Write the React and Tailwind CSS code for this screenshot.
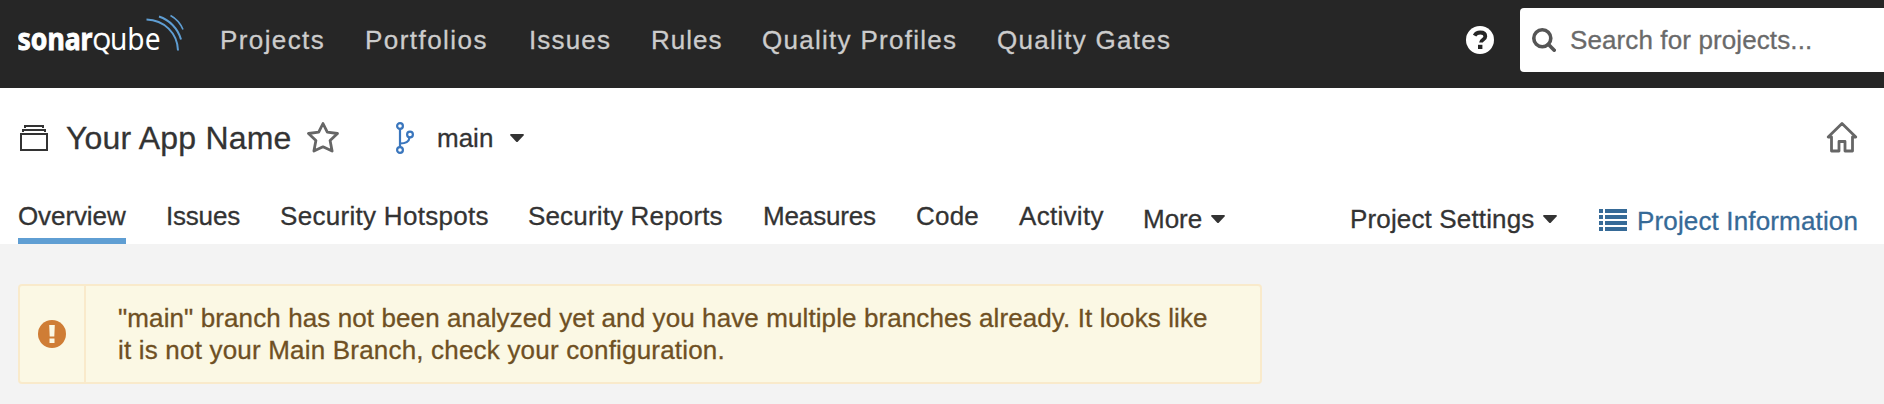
import React from "react";

const NAV = [
  { label: "Projects", cls: "w-[105px] tracking-[1.4px]" },
  { label: "Portfolios", cls: "w-[124px] tracking-[1.45px]" },
  { label: "Issues", cls: "w-[82px] tracking-[1.15px]" },
  { label: "Rules", cls: "w-[71px] tracking-[1px]" },
  { label: "Quality Profiles", cls: "w-[195px] tracking-[1.28px]" },
  { label: "Quality Gates", cls: "w-[175px] tracking-[1.3px]" },
];

const TABS = [
  { label: "Overview", cls: "w-[108px] tracking-[-0.1px]", active: true },
  { label: "Issues", cls: "w-[74px] tracking-[-0.2px]" },
  { label: "Security Hotspots", cls: "w-[208px] tracking-[0.3px]" },
  { label: "Security Reports", cls: "w-[195px] tracking-[0.16px]" },
  { label: "Measures", cls: "w-[113px] tracking-[-0.15px]" },
  { label: "Code", cls: "w-[63px] tracking-[0.2px]" },
  { label: "Activity", cls: "w-[85px] tracking-[0.3px]" },
];

function Caret({ className = "" }) {
  return (
    <svg className={`h-2 w-3.5 shrink-0 ${className}`} viewBox="0 0 14 8">
      <path d="M1 0h12q1.4.3.6 1.4L8 7.4q-1 1-2 0L.4 1.400Q-.4.3 1 0z" fill="#333" />
    </svg>
  );
}

function Logo() {
  return (
    <svg className="h-[54px] w-[168px] shrink-0" viewBox="18 8 168 54">
      <g fill="#fff" fontFamily="'Noto Sans', sans-serif">
        <text x="17.500" y="50" fontSize="30" fontWeight="700" textLength="75" lengthAdjust="spacingAndGlyphs" stroke="#fff" strokeWidth="0.900">sonar</text>
        <text x="92.500" y="50" fontSize="23" textLength="18.500" lengthAdjust="spacingAndGlyphs" stroke="#fff" strokeWidth="0.300">Q</text>
        <text x="110" y="50" fontSize="30" fontWeight="400" textLength="50.500" lengthAdjust="spacingAndGlyphs">ube</text>
      </g>
      <g fill="none" stroke="#5f9ed3" strokeWidth="2">
        <path d="M146.500 19.500C164 20 177.500 33 178 50.500" />
        <path d="M159 16.500C169.500 20 178 28.500 181 39.500" />
        <path d="M170.500 15.500C176 18.500 180.500 23.500 183 29.500" strokeWidth="1.600" />
      </g>
    </svg>
  );
}

export default function App() {
  return (
    <div className="h-[404px] w-[1884px] overflow-hidden bg-[#f3f3f3] font-['Liberation_Sans',Arial,sans-serif] text-[26px] leading-8 text-[#333] [-webkit-text-stroke:0.3px]">
      <header className="flex h-[88px] items-start bg-[#262626] pl-[18px]">
        <div className="pt-2 [-webkit-text-stroke:0]">
          <Logo />
        </div>
        <nav className="ml-[34px] flex gap-10 pt-6 text-[#ccc]">
          {NAV.map((n) => (
            <a key={n.label} className={`whitespace-nowrap ${n.cls}`}>{n.label}</a>
          ))}
        </nav>
        <svg className="mt-[26px] ml-auto size-7" viewBox="0 0 28 28">
          <circle cx="14" cy="14" r="14" fill="#fff" />
          <path d="M8.600 9.600C10 7 12 6.500 14.200 6.500c3 0 5.100 1.400 5.100 3.900 0 3.400-4.300 3.200-4.300 6" fill="none" stroke="#262626" strokeWidth="3.800" />
          <rect x="12" y="18.800" width="4.400" height="4.200" fill="#262626" />
        </svg>
        <div className="mt-2 ml-[26px] flex h-16 w-[364px] items-center rounded-l bg-white pl-3">
          <svg className="size-6" viewBox="0 0 24 24" fill="none" stroke="#555" strokeWidth="3.600">
            <circle cx="10.300" cy="10.300" r="8.500" />
            <path d="M16.300 16.300L22.200 22.200" strokeLinecap="round" />
          </svg>
          <span className="ml-3.5 tracking-[0.11px] whitespace-nowrap text-[#6a6a6a]">Search for projects...</span>
        </div>
      </header>

      <section className="flex h-[156px] flex-col justify-between bg-white pr-[26px] pl-[18px]">
        <div className="flex h-[100px] items-center">
          <svg className="ml-0.5 h-[26px] w-7" viewBox="0 0 28 26" fill="none" stroke="#333" strokeWidth="2">
            <path d="M1 9h26v16H1z" />
            <path d="M3 7V5h22v2M5 3V1h18v2" />
          </svg>
          <h1 className="ml-[18px] w-[227px] text-[32px] leading-9 tracking-[0.2px] whitespace-nowrap">Your App Name</h1>
          <svg className="ml-3.5 -mt-0.5 h-[31px] w-8" viewBox="0 0 32 31">
            <path d="M16 1.500l4.300 8.700 10.200 1.300-7.400 6.900 2 10.600L16 24.800 6.900 29l2-10.600-7.400-6.900 10.200-1.300z" fill="none" stroke="#666" strokeWidth="2.800" strokeLinejoin="round" />
          </svg>
          <svg className="ml-[57px] h-8 w-[18px]" viewBox="0 0 18 32" fill="none" stroke="#3a76bd" strokeWidth="2.200">
            <circle cx="4" cy="4" r="2.900" />
            <circle cx="4" cy="28" r="2.900" />
            <circle cx="14" cy="12.500" r="2.900" />
            <path d="M4 7v18M4 21.500c5 0 9-1 9.500-6" />
          </svg>
          <span className="ml-[23px] w-14">main</span>
          <Caret className="ml-[17px]" />
          <svg className="ml-auto -mt-0.5 h-8 w-8" viewBox="0 0 32 32">
            <path d="M16 2.500L2.200 16H5.500V30H13V20.500h6V30h7.500V16h3.300z" fill="none" stroke="#666" strokeWidth="2.800" strokeLinejoin="round" />
          </svg>
        </div>
        <div className="flex h-[44px] items-start">
          <nav className="flex items-start gap-10">
            {TABS.map((t) => (
              <a
                key={t.label}
                className={`h-[44px] whitespace-nowrap ${t.cls} ${t.active ? "border-b-6 border-[#5f9ed3]" : ""}`}
              >
                {t.label}
              </a>
            ))}
            <a className="-ml-px flex items-center pt-[3px]">
              <span className="w-[60px]">More</span>
              <Caret className="ml-2" />
            </a>
          </nav>
          <div className="ml-auto flex items-start pt-[3px]">
            <a className="flex items-center">
              <span className="w-[185px] tracking-[0.15px] whitespace-nowrap">Project Settings</span>
              <Caret className="ml-2" />
            </a>
            <a className="mt-0.5 ml-[42px] flex items-center text-[#366a97]">
              <svg className="h-[22px] w-7 -translate-y-px" viewBox="0 0 28 22" fill="currentColor">
                <path d="M0 0h4v4H0zM6 0h22v4H6zM0 6h4v4H0zM6 6h22v4H6zM0 12h4v4H0zM6 12h22v4H6zM0 18h4v4H0zM6 18h22v4H6z" />
              </svg>
              <span className="ml-[10px] w-[221px] tracking-[0.15px] whitespace-nowrap">Project Information</span>
            </a>
          </div>
        </div>
      </section>

      <main className="px-[18px] pt-10">
        <div className="flex h-[100px] w-[1244px] rounded border-2 border-[#f9eacb] bg-[#fbf8e4] text-[#6f5023]">
          <div className="flex w-[66px] items-center justify-center border-r-2 border-[#f9eacb]">
            <svg className="size-7" viewBox="0 0 28 28">
              <circle cx="14" cy="14" r="14" fill="#cf7d35" />
              <path d="M11.200 5h5.600l-.5 11.500h-4.600zM11.500 18.500h5v4.500h-5z" fill="#fbf8e4" />
            </svg>
          </div>
          <p className="pt-4 pl-8 whitespace-nowrap">
            <span className="block tracking-[0.1px]">"main" branch has not been analyzed yet and you have multiple branches already. It looks like</span>
            <span className="block tracking-[0.19px]">it is not your Main Branch, check your configuration.</span>
          </p>
        </div>
      </main>
    </div>
  );
}
